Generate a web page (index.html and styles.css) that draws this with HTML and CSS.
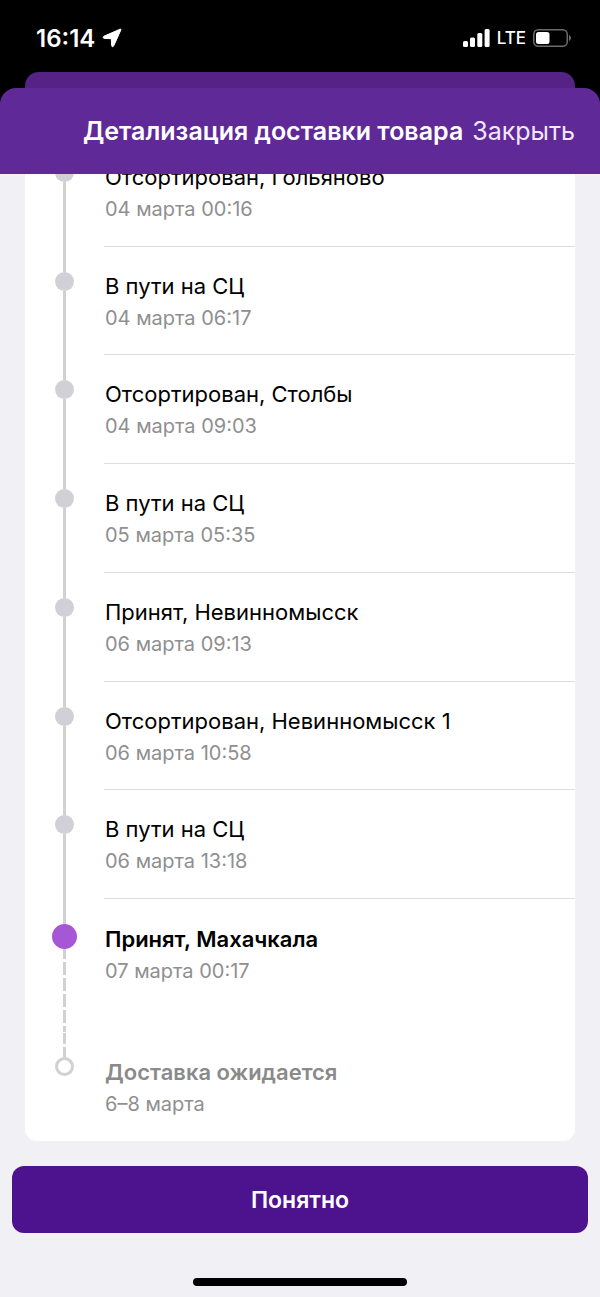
FILE: index.html
```
<!DOCTYPE html>
<html lang="ru">
<head>
<meta charset="utf-8">
<meta name="viewport" content="width=device-width, initial-scale=1">
<title>Детализация доставки товара</title>
<link rel="stylesheet" href="styles.css">
</head>
<body>
<div class="screen">
  <div class="screen-top">
    <div class="status-bar">
      <div class="status-group">
        <span class="clock">16:14</span>
        <svg class="location-icon" viewBox="0 0 20 20" aria-hidden="true"><path d="M18 1.200 1.800 8.300C.8 8.900 1 10.300 2.200 10.400L9.300 10.700 9.600 17.600C9.700 18.900 11.100 19.100 11.700 17.900L18.800 2C19.100 1.300 18.700.9 18 1.200Z" fill="#fff" stroke="#fff" stroke-width="1" stroke-linejoin="round"/></svg>
      </div>
      <div class="status-group">
        <svg class="signal-icon" viewBox="0 0 27 18" aria-hidden="true"><g fill="#fff"><rect x="0" y="12" width="5" height="6" rx="1.500"/><rect x="7" y="8.500" width="5" height="9.500" rx="1.500"/><rect x="14.300" y="4" width="5" height="14" rx="1.500"/><rect x="21.600" y="0" width="5" height="18" rx="1.500"/></g></svg>
        <span class="network">LTE</span>
        <svg class="battery-icon" viewBox="0 0 39 18" aria-hidden="true"><rect x=".75" y=".75" width="33.500" height="16.500" rx="4.500" fill="none" stroke="#6b6b6b" stroke-width="1.500"/><rect x="3" y="3" width="13.500" height="12" rx="2.500" fill="#fff"/><path d="M36 6v6c1.200-.5 2-1.600 2-3s-.8-2.500-2-3Z" fill="#6b6b6b"/></svg>
      </div>
    </div>
    <div class="back-sheet"></div>
    <header class="sheet-header">
      <h1 class="sheet-title">Детализация доставки товара</h1>
      <button class="close-button" type="button">Закрыть</button>
    </header>
  </div>

  <main class="sheet-body">
    <ol class="timeline">
      <li class="step"><div class="track"><span class="dot"></span></div><div class="info"><p class="status">Отсортирован, Гольяново</p><time class="date">04 марта 00:16</time></div></li>
      <li class="step"><div class="track"><span class="dot"></span></div><div class="info"><p class="status">В пути на СЦ</p><time class="date">04 марта 06:17</time></div></li>
      <li class="step"><div class="track"><span class="dot"></span></div><div class="info"><p class="status">Отсортирован, Столбы</p><time class="date">04 марта 09:03</time></div></li>
      <li class="step"><div class="track"><span class="dot"></span></div><div class="info"><p class="status">В пути на СЦ</p><time class="date">05 марта 05:35</time></div></li>
      <li class="step"><div class="track"><span class="dot"></span></div><div class="info"><p class="status">Принят, Невинномысск</p><time class="date">06 марта 09:13</time></div></li>
      <li class="step"><div class="track"><span class="dot"></span></div><div class="info"><p class="status">Отсортирован, Невинномысск 1</p><time class="date">06 марта 10:58</time></div></li>
      <li class="step"><div class="track"><span class="dot"></span></div><div class="info"><p class="status">В пути на СЦ</p><time class="date">06 марта 13:18</time></div></li>
      <li class="step step-current"><div class="track"><span class="dot"></span></div><div class="info"><p class="status">Принят, Махачкала</p><time class="date">07 марта 00:17</time></div></li>
      <li class="step step-pending"><div class="track"><span class="dot"></span></div><div class="info"><p class="status">Доставка ожидается</p><span class="date">6–8 марта</span></div></li>
    </ol>
  </main>

  <footer class="sheet-footer">
    <button class="confirm-button" type="button">Понятно</button>
    <div class="home-indicator"></div>
  </footer>
</div>
</body>
</html>
```
FILE: styles.css
```
* {
  box-sizing: border-box;
}

body {
  margin: 0;
  background: #f1f0f5;
  color: #000;
  font-family: Inter, Roboto, "Liberation Sans", sans-serif;
}

.screen {
  display: flex;
  flex-direction: column;
  height: 100vh;
  min-height: 800px;
  overflow: hidden;
}

.screen-top {
  background: #000;
  color: #fff;
}

.status-bar {
  display: flex;
  justify-content: space-between;
  align-items: center;
  height: 72px;
  padding: 4px 28px 0 36px;
}

.status-group {
  display: flex;
  align-items: center;
  gap: 7px;
}

.clock {
  font-size: 24px;
  font-weight: 600;
}

.location-icon {
  width: 20px;
  height: 20px;
}

.signal-icon {
  width: 27px;
  height: 18px;
}

.network {
  font-size: 17px;
  font-weight: 500;
}

.battery-icon {
  width: 39px;
  height: 18px;
}

.back-sheet {
  height: 16px;
  margin: 0 25px;
  border-radius: 14px 14px 0 0;
  background: #552386;
}

.sheet-header {
  display: flex;
  justify-content: flex-end;
  align-items: center;
  gap: 9px;
  height: 86px;
  padding: 0 25px;
  border-radius: 16px 16px 0 0;
  background: #5f2a98;
}

.sheet-title {
  margin: 0;
  font-size: 25px;
  font-weight: 600;
  white-space: nowrap;
}

.close-button {
  padding: 0;
  border: 0;
  background: none;
  color: #f3e8fb;
  font: inherit;
  font-size: 25px;
}

.sheet-body {
  display: flex;
  flex: 1;
  flex-direction: column;
  min-height: 0;
  padding: 0 25px;
  overflow: hidden;
}

/* Scrolled position: the first step sits partly under the header */
.timeline {
  display: flex;
  flex: 1;
  flex-direction: column;
  margin: -36px 0 0;
  padding: 0;
  border-radius: 12px;
  background: #fff;
  list-style: none;
}

.step {
  display: flex;
  flex: 1;
}

.track {
  display: flex;
  flex-direction: column;
  align-items: center;
  width: 79px;
}

.track::before,
.track::after {
  width: 3px;
  background: #d1d1d3;
  content: "";
}

.track::before {
  height: 25px;
}

.track::after {
  flex: 1;
}

.dot {
  width: 19px;
  height: 19px;
  border-radius: 50%;
  background: #d1d0d6;
}

.info {
  flex: 1;
  padding: 23px 0 0 1px;
  border-bottom: 1px solid #dedee0;
}

.status {
  margin: 0;
  font-size: 22px;
  line-height: 32px;
}

.date {
  display: block;
  color: #8f8f8f;
  font-size: 20px;
  line-height: 32px;
}

.step-current {
  flex: none;
  height: 133px;
}

.step-current .dot {
  width: 25px;
  height: 25px;
  background: #a657d6;
}

.step-current .track::after {
  background: repeating-linear-gradient(#d1d1d3 0 10px, #fff 10px 13px, #d1d1d3 13px 16px);
}

.step-current .info,
.step-pending .info {
  padding-top: 24px;
  border-bottom: 0;
}

.step-current .status,
.step-pending .status {
  font-weight: 600;
}

.step-pending {
  flex: none;
  height: 109px;
}

.step-pending .dot {
  border: 3px solid #d1d1d3;
  background: #fff;
}

.step-pending .track::before {
  background: linear-gradient(#fff 1px, #d1d1d3 1px 12px, #fff 12px 15px, #d1d1d3 15px);
}

.step-pending .track::after {
  background: none;
}

.step-pending .status {
  color: #8a8a8a;
}

.sheet-footer {
  display: flex;
  flex-direction: column;
  align-items: center;
  gap: 45px;
  padding: 25px 12px 11px;
}

.confirm-button {
  width: 100%;
  height: 67px;
  border: 0;
  border-radius: 12px;
  background: #4d138f;
  color: #fff;
  font: inherit;
  font-size: 23px;
  font-weight: 600;
}

.home-indicator {
  width: 214px;
  height: 8px;
  border-radius: 4px;
  background: #000;
}
```
